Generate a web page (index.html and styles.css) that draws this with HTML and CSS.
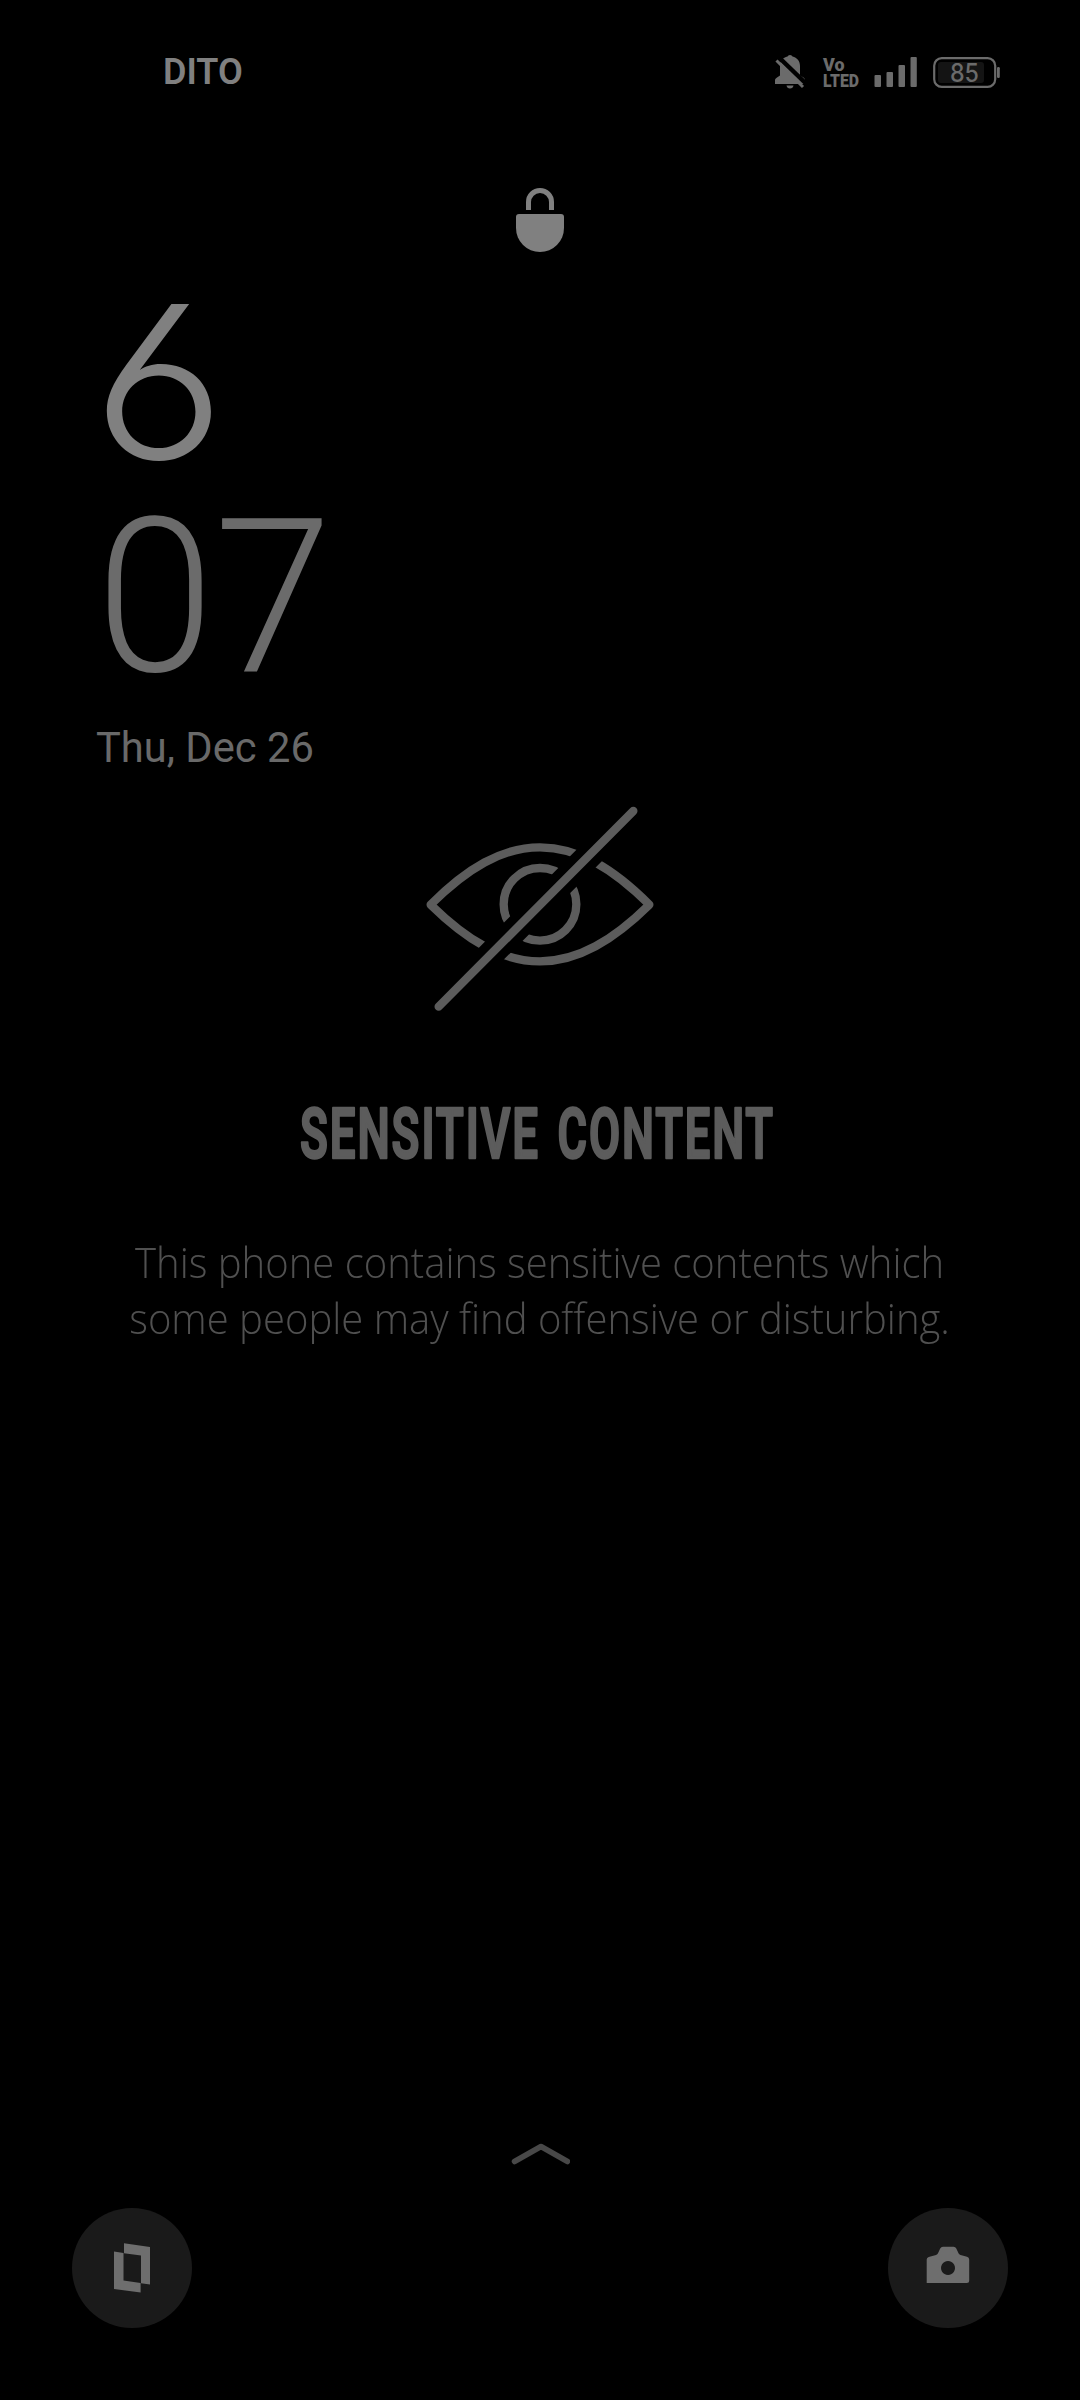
FILE: index.html
```html
<!DOCTYPE html>
<html lang="en">
<head>
<meta charset="utf-8">
<title>Lock screen</title>
<link rel="stylesheet" href="styles.css">
</head>
<body>
<main class="screen">
  <header class="status">
    <span class="carrier">DITO</span>
    <svg class="status-icons" viewBox="0 0 260 70" width="260" height="70">
      <!-- muted bell -->
      <g>
        <path d="M15 44 V40 Q15 38.500 17 37.500 L20 35.500 V26 C20 20.500 23 17.500 27.500 16.500 Q28 15 30 15 Q32 15 32.500 16.500 C37 17.500 40 21 40 26 V35.500 L43.500 37.500 Q45 38.500 45 40 V44 Z M26.500 45.500 H33.500 Q33 48.500 30 48.500 Q27 48.500 26.500 45.500 Z"/>
        <path class="cut" d="M18.500 17 L47.500 45" stroke-width="4.500"/>
        <path class="line" d="M16.500 20.500 L43 47" stroke-width="3"/>
      </g>
      <g class="volte">
        <text x="63" y="31" font-size="19" textLength="21.500" lengthAdjust="spacingAndGlyphs">Vo</text>
        <text x="63" y="47" font-size="19" textLength="36" lengthAdjust="spacingAndGlyphs">LTED</text>
      </g>
      <!-- signal -->
      <rect x="114.500" y="35" width="6.500" height="12" rx="1"/>
      <rect x="126.500" y="32" width="6.500" height="15" rx="1"/>
      <rect x="138.500" y="25" width="6.500" height="22" rx="1"/>
      <rect x="150.500" y="17" width="6.300" height="30" rx="1"/>
      <!-- battery -->
      <rect class="level" x="178" y="22" width="46" height="21" rx="3"/>
      <rect class="line" x="174.200" y="18.200" width="61" height="28.600" rx="7.500" stroke-width="2.200"/>
      <rect x="237" y="27" width="2.800" height="11" rx="1.200"/>
      <text class="percent" x="190" y="41.500" font-size="25" textLength="29" lengthAdjust="spacingAndGlyphs">85</text>
    </svg>
  </header>

  <svg class="lock" viewBox="78 54 144 192" width="48" height="64">
    <path d="M115.500 120 V96 a34.500 34.500 0 0 1 69 0 V120" fill="none" stroke="#808080" stroke-width="15"/>
    <path d="M78 141 q0 -9 9 -9 H213 q9 0 9 9 V174 a72 72 0 0 1 -144 0 Z" fill="#808080"/>
  </svg>

  <section class="clock">
    <div class="hour">6</div>
    <div class="minute">07</div>
    <div class="date">Thu, Dec 26</div>
  </section>

  <section class="notice">
    <svg class="eye" viewBox="0 0 840 720" width="280" height="240">
      <defs>
        <mask id="gap" maskUnits="userSpaceOnUse" x="0" y="0" width="840" height="720">
          <rect width="840" height="720" fill="#fff"/>
          <path d="M760 3 L56 710" stroke="#000" stroke-width="78"/>
        </mask>
      </defs>
      <g mask="url(#gap)">
        <path d="M92 344 C200 236 305 172 420 172 S640 236 748 344 C640 450 535 514 420 514 S200 450 92 344 Z"/>
        <circle cx="420" cy="343" r="109"/>
      </g>
      <path d="M700 63 L116 650"/>
    </svg>
    <h1 class="headline">
      <svg viewBox="0 0 520 100" width="520" height="100">
        <text x="20" y="78" textLength="240" lengthAdjust="spacingAndGlyphs">SENSITIVE</text>
        <text x="277.500" y="78" textLength="217.500" lengthAdjust="spacingAndGlyphs">CONTENT</text>
      </svg>
    </h1>
    <p class="message">This phone contains sensitive contents which<br>some people may find offensive or disturbing.</p>
  </section>

  <footer class="dock">
    <svg class="chevron" viewBox="0 0 60 24" width="60" height="24">
      <path d="M4.500 19.500 L31 4.500 L57.500 19.500"/>
    </svg>
    <div class="shortcuts">
      <span class="shortcut">
        <svg viewBox="0 0 120 120" width="120" height="120">
          <path d="M52 35.300 L78 39 V76.500 L69 75.300 V47.500 L52 45.200 Z M42 43.500 L51.500 44.900 V72.500 L68.600 75 V84.500 L42 81 Z"/>
        </svg>
      </span>
      <span class="shortcut">
        <svg viewBox="0 0 120 120" width="120" height="120">
          <path fill-rule="evenodd" d="M38.700 75 V51.500 Q38.700 49.500 40.700 48.900 L48 47 Q49.500 46.500 50 45.300 L52.200 40.500 Q53 38.700 55 38.700 H65.500 Q67.500 38.700 68.300 40.500 L70.500 45.300 Q71 46.500 72.500 46.900 L79 48.700 Q81.200 49.500 81.200 51.500 V72.500 Q81.200 75 78.700 75 Z M60 53 a7 7 0 1 0 0.010 0 Z"/>
        </svg>
      </span>
    </div>
  </footer>
</main>
</body>
</html>
```
FILE: styles.css
```css
body {
  margin: 0;
  background: #000;
  font-family: Roboto, "Liberation Sans", sans-serif;
}

.screen {
  width: 1080px;
  height: 2400px;
  display: flex;
  flex-direction: column;
  background: #000;
  overflow: hidden;
}

.status {
  display: flex;
  justify-content: space-between;
  height: 110px;
  padding: 40px 60px 0 163px;
  box-sizing: border-box;
}

.carrier {
  font-size: 36px;
  line-height: 64px;
  font-weight: 600;
  color: #808080;
}

.status-icons { fill: #6b6b6b; }
.status-icons .line { fill: none; stroke: #6b6b6b; }
.status-icons .cut { fill: none; stroke: #000; }
.status-icons .level { fill: #141414; }
.volte { font-weight: 900; }
.percent { font-family: Inter, sans-serif; font-weight: 500; }

.lock {
  margin: 78px auto 0;
}

.clock {
  padding-left: 96px;
  margin-top: 28px;
}

.hour,
.minute {
  font-size: 216px;
  height: 212px;
  line-height: 212px;
  transform-origin: left center;
}

.hour {
  font-family: Inter, sans-serif;
  font-size: 213px;
  font-weight: 350;
  font-feature-settings: "cv03", "ss01";
  color: #808080;
  transform: translate(-4px, -4px) scaleX(1.09);
}

.minute {
  font-weight: 300;
  color: #6b6b6b;
  transform: scaleX(0.985);
}

.date {
  margin-top: 19px;
  font-size: 41.700px;
  line-height: 50px;
  color: #696969;
}

.notice {
  display: flex;
  flex-direction: column;
  align-items: center;
}

.eye {
  margin-top: 17px;
  fill: none;
  stroke: #5c5c5c;
  stroke-width: 25;
  stroke-linecap: round;
  stroke-linejoin: round;
}

.headline {
  height: 100px;
  margin: 50px 0 0;
}

.headline svg {
  display: block;
  overflow: visible;
}

.headline text {
  font-size: 71px;
  font-weight: 600;
  letter-spacing: 3px;
  fill: #5c5c5c;
  stroke: #5c5c5c;
  stroke-width: 2.500;
  stroke-linejoin: round;
}

.message {
  margin: 54px 0 0;
  font-family: "Open Sans", "Noto Sans", sans-serif;
  font-size: 42px;
  font-weight: 300;
  line-height: 55.500px;
  text-align: center;
  white-space: nowrap;
  color: #505050;
  transform: scaleX(0.953);
}

.dock {
  margin-top: auto;
  padding-bottom: 72px;
  display: flex;
  flex-direction: column;
  align-items: center;
}

.chevron {
  fill: none;
  stroke: #484848;
  stroke-width: 5.500;
  stroke-linecap: round;
  stroke-linejoin: round;
}

.shortcuts {
  align-self: stretch;
  display: flex;
  justify-content: space-between;
  padding: 0 72px;
  margin-top: 42px;
}

.shortcut {
  width: 120px;
  height: 120px;
  border-radius: 50%;
  background: #1a1a1a;
}

.shortcut svg {
  display: block;
  fill: #6e6e6e;
}
```
